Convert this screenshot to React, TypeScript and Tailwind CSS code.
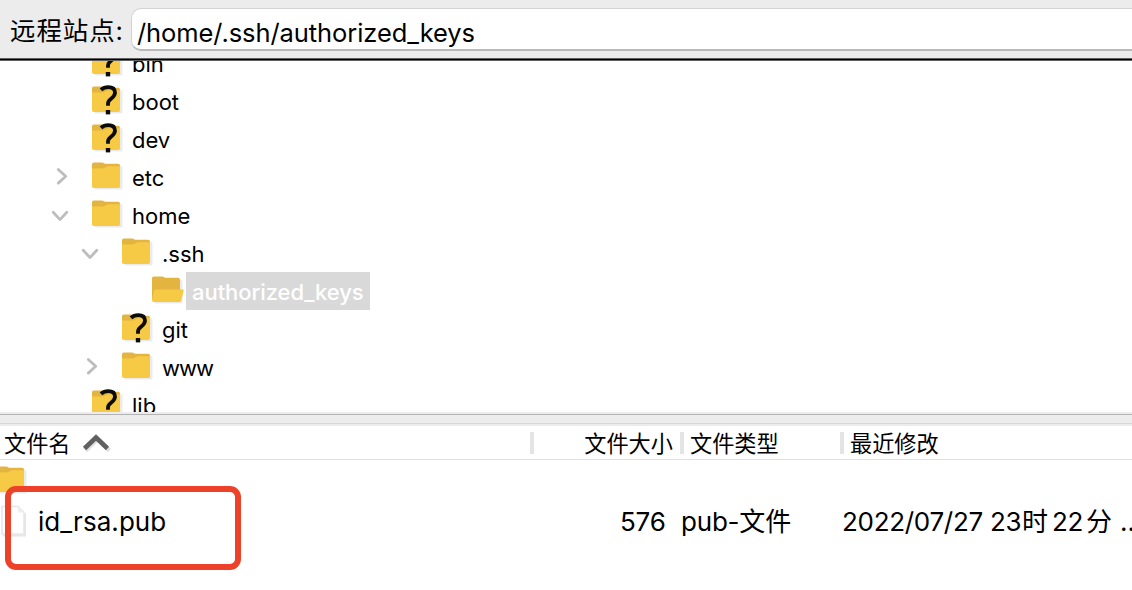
import React from "react";

const FONT = "font-[Inter,'Noto_Sans_CJK_SC',sans-serif]";

type Kind = "closed" | "open" | "unknown";

function Folder({ kind = "closed" }: { kind?: Kind }) {
  return (
    <svg width="34" height="38" viewBox="0 0 34 38" className="block shrink-0">
      <path d="M2 8h27a1.5 1.5 0 0 1 1.5 1.5V30a1.5 1.5 0 0 1-1.5 1.5H3Z" fill="#ebebeb" />
      <path d="M0 6.2Q0 4.4 1.8 4.4H10q1 0 1.8.6l1.2.8h13q2 0 2 2V28H0Z" fill="#e3b540" />
      {kind === "open" ? (
        <path d="M3.6 17.6H31q1 0 .7 1l-2.4 10q-.4 1.4-1.8 1.4H1.8Q0 30 0 28.2l2-9.4q.3-1.2 1.6-1.2Z" fill="#f7ca45" />
      ) : (
        <path d="M0 10.6h10.5q1 0 1.8-.5l2.2-1.4q.8-.5 1.6-.5H28v20q0 1.8-1.8 1.8H1.8Q0 30 0 28.2Z" fill="#f7ca45" />
      )}
      {kind === "unknown" && (
        <g stroke="#0b0b0b" fill="none">
          <path d="M9 7.8Q12 5.1 16.2 5.1Q23 5.1 23 10.6Q23 13.6 19.6 16.2Q16 19 16 21.4V23.8" strokeWidth="3.8" />
          <path d="M16 28v4.4" strokeWidth="4.4" />
        </g>
      )}
    </svg>
  );
}

function Arrow({ open }: { open?: boolean }) {
  return (
    <svg width="20" height="38" viewBox="0 0 20 38" fill="none" stroke="#bdbdbd" strokeWidth="2.8" strokeLinecap="round" strokeLinejoin="round" className="block">
      {open ? <path d="m3.2 16.3 6.8 7.3 6.8-7.3" /> : <path d="m8.3 11.5 7.4 6.8-7.4 6.8" />}
    </svg>
  );
}

interface NodeProps {
  name: string;
  level: number;
  kind?: Kind;
  arrow?: "open" | "closed";
  selected?: boolean;
}

const indent = ["pl-[50px]", "pl-[80px]", "pl-[110px]"];

const nodes: NodeProps[] = [
  { name: "bin", level: 0, kind: "unknown" },
  { name: "boot", level: 0, kind: "unknown" },
  { name: "dev", level: 0, kind: "unknown" },
  { name: "etc", level: 0, arrow: "closed" },
  { name: "home", level: 0, arrow: "open" },
  { name: ".ssh", level: 1, arrow: "open" },
  { name: "authorized_keys", level: 2, kind: "open", selected: true },
  { name: "git", level: 1, kind: "unknown" },
  { name: "www", level: 1, arrow: "closed" },
  { name: "lib", level: 0, kind: "unknown" },
];

function TreeNode({ name, level, kind, arrow, selected }: NodeProps) {
  return (
    <div className={`flex h-[38px] shrink-0 ${indent[level]}`}>
      <div className="w-[42px]">{arrow && <Arrow open={arrow === "open"} />}</div>
      <Folder kind={kind} />
      <span
        className={`h-[38px] px-[6px] text-[22px] leading-[40px] ${
          selected
            ? "w-[184px] bg-[#d9d9d9] font-medium tracking-[-0.05px] text-white"
            : name === "www"
              ? "tracking-[-1px]"
              : "tracking-[0px]"
        }`}
      >
        {name}
      </span>
    </div>
  );
}

export default function App() {
  return (
    <div className={`flex h-[590px] w-[1132px] flex-col overflow-hidden bg-white text-black ${FONT}`}>
      <header className="flex h-[58px] shrink-0 bg-[#ececec] pt-2">
        <label className="w-[131px] shrink-0 whitespace-nowrap pl-[10px] text-[25.5px] leading-[46px] tracking-[0.9px]">远程站点:</label>
        <div className="h-[43px] flex-1 rounded-l-[10px] border border-r-0 border-[#d2d2d2] border-b-2 border-b-[#b9b9b9] bg-white pl-[5px] text-[25.5px] leading-[48px] tracking-[-0.08px]">
          /home/.ssh/authorized_keys
        </div>
      </header>
      <div className="h-[3px] shrink-0 border-y border-[#606060] bg-black" />
      <main className="flex h-[351px] shrink-0 flex-col overflow-hidden">
        <div className="-mt-[17px] flex flex-col">
          {nodes.map((n) => <TreeNode key={n.name} {...n} />)}
        </div>
      </main>
      <div className="flex h-[14px] shrink-0 flex-col bg-[#ececec]">
        <div className="mt-[2px] h-px bg-[#b3b3b3]" />
        <div className="mt-[8px] h-px bg-[#d8d8d8]" />
      </div>
      <div className="flex h-[34px] shrink-0 border-b border-[#dfdfdf] pt-[6px] text-[22.2px] leading-[24px]">
        <div className="flex w-[534px] justify-between pl-1">
          <div className="flex">
            <span className="w-[78px]">文件名</span>
            <svg width="30" height="24" viewBox="0 0 30 24" fill="none" strokeWidth="4.6">
              <path d="m3.5 18.5 12-11.5 12 11.5" stroke="#e1e1e1" />
              <path d="m2.5 16.5 11.5-11 11.5 11" stroke="#606060" />
            </svg>
          </div>
          <i className="h-[22px] w-1 bg-[#e4e4e4]" />
        </div>
        <div className="flex w-[150px] justify-end gap-[7px]">
          <span>文件大小</span>
          <i className="h-[22px] w-1 bg-[#e4e4e4]" />
        </div>
        <div className="flex w-[160px] justify-between pl-[6px]">
          <span>文件类型</span>
          <i className="h-[22px] w-1 bg-[#e4e4e4]" />
        </div>
        <span className="pl-[6px]">最近修改</span>
      </div>
      <section className="relative h-[130px] shrink-0 overflow-hidden text-[26px]">
        <div className="-ml-1 flex h-[42px] pt-[2px]"><Folder /></div>
        <div className="flex h-[38px] whitespace-nowrap leading-[39px]">
          <svg width="38" height="38" viewBox="0 0 38 38" className="shrink-0">
            <path d="M3 33.5h22v-22" stroke="#e6e6e6" strokeWidth="2" fill="none" />
            <path d="M2 4.5h16l6 6V32H2Z" fill="white" stroke="#e6e6e6" strokeWidth="1.5" />
            <path d="M18 4.5v6h6Z" fill="#eee" />
          </svg>
          <span className="w-[582px] shrink-0 tracking-[0.05px]">id_rsa.pub</span>
          <span className="w-[61px] shrink-0 tracking-[-0.2px]">576</span>
          <span className="w-[161px] shrink-0 tracking-[-0.2px]">pub-文件</span>
          <span className="flex shrink-0">
            <span className="w-[180px] shrink-0 tracking-[-0.3px]">2022/07/27 23</span>
            <span className="w-[30px] shrink-0">时</span>
            <span className="w-[34px] shrink-0 tracking-[-0.3px]">22</span>
            <span className="w-[34px] shrink-0">分</span>
            <span>..</span>
          </span>
        </div>
        <div className="absolute left-[5px] top-[26px] h-[84px] w-[236px] rounded-[11px] border-[6px] border-[#ed4229]" />
      </section>
    </div>
  );
}
